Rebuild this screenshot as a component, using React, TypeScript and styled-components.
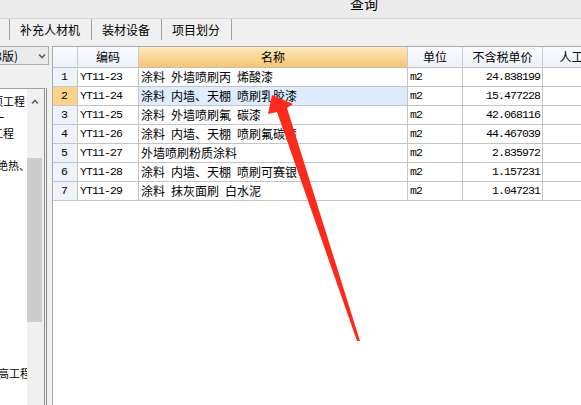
import React from 'react'
import styled, { createGlobalStyle } from 'styled-components'

type Row = {
    no: number
    code: string
    name: string
    unit: string
    price: string
}

type TreeItem = {
    text: string
    shift: number
}

const rows: Row[] = [
    { no: 1, code: 'YT11-23', name: '涂料\u2002外墙喷刷丙\u2002烯酸漆', unit: 'm2', price: '24.838199' },
    { no: 2, code: 'YT11-24', name: '涂料\u2002内墙、天棚\u2002喷刷乳胶漆', unit: 'm2', price: '15.477228' },
    { no: 3, code: 'YT11-25', name: '涂料\u2002外墙喷刷氟\u2002碳漆', unit: 'm2', price: '42.068116' },
    { no: 4, code: 'YT11-26', name: '涂料\u2002内墙、天棚\u2002喷刷氟碳漆', unit: 'm2', price: '44.467039' },
    { no: 5, code: 'YT11-27', name: '外墙喷刷粉质涂料', unit: 'm2', price: '2.835972' },
    { no: 6, code: 'YT11-28', name: '涂料\u2002内墙、天棚\u2002喷刷可赛银', unit: 'm2', price: '1.157231' },
    { no: 7, code: 'YT11-29', name: '涂料\u2002抹灰面刷\u2002白水泥', unit: 'm2', price: '1.047231' },
]

const selectedRow = 2

// left tree is scrolled off the window edge, only the tails of the labels show
const treeItems: TreeItem[] = [
    { text: '项工程', shift: -8 },
    { text: '一', shift: -7 },
    { text: '工程', shift: -8 },
    { text: '', shift: 0 },
    { text: '绝热、防腐', shift: -3 },
    ...Array.from({ length: 12 }, () => ({ text: '', shift: 0 })),
    { text: '高工程', shift: -2 },
]

const tabs = ['补充人材机', '装材设备', '项目划分']

const columns = [25, 61, 269, 55, 80, 70]

const GlobalStyle = createGlobalStyle`
    html, body {
        margin: 0;
        padding: 0;
    }
    body {
        background: #f0f0f0;
        font-family: "Noto Sans CJK SC", "Noto Sans", sans-serif;
        font-size: 12px;
        color: #000;
        overflow: hidden;
    }
`

const Window = styled.div`
    position: relative;
    width: 581px;
    height: 405px;
    overflow: hidden;
    display: flex;
    flex-direction: column;
`

const TitleBar = styled.div`
    height: 18px;
    flex-shrink: 0;
    background: #ebebeb;
    border-bottom: 1px solid #d7d7d7;
    padding-left: 350px;
    overflow: hidden;
`

const Title = styled.div`
    font-size: 14px;
    line-height: 14px;
    margin-top: -4px;
`

const Toolbar = styled.div`
    display: flex;
    height: 21px;
    flex-shrink: 0;
    padding-left: 9px;
`

const Tab = styled.div<{ $first?: boolean }>`
    display: flex;
    align-items: center;
    padding: 0 11px 0 10px;
    border-right: 1px solid #a3a3a3;
    border-left: ${p => (p.$first ? '1px solid #a3a3a3' : 'none')};
    white-space: nowrap;
    line-height: 12px;
`

const Main = styled.div`
    display: flex;
    flex: 1;
    min-height: 0;
`

const LeftPanel = styled.div`
    width: 52px;
    flex-shrink: 0;
    display: flex;
    flex-direction: column;
    padding-top: 6px;
    box-sizing: border-box;
`

const Dropdown = styled.div`
    width: 49px;
    height: 19px;
    box-sizing: border-box;
    border: 1px solid #adadad;
    border-left: none;
    background: #eaeaea;
    display: flex;
    justify-content: flex-end;
    align-items: center;
    overflow: hidden;
`

const DropdownLabel = styled.span`
    white-space: nowrap;
    flex-shrink: 0;
    line-height: 12px;
`

const DropdownArrow = styled.span`
    width: 30px;
    flex-shrink: 0;
    display: flex;
    padding-left: 20px;
    box-sizing: border-box;
`

const TreeBox = styled.div`
    margin-top: 23px;
    width: 47px;
    flex: 1;
    box-sizing: border-box;
    border-top: 1px solid #a0a0a0;
    border-right: 3px double #8e8e8e;
    display: flex;
`

const TreeList = styled.div`
    width: 27px;
    background: #fff;
    overflow: hidden;
    padding-top: 4px;
`

const TreeRow = styled.div<{ $shift: number }>`
    height: 16px;
    line-height: 16px;
    font-size: 11px;
    white-space: nowrap;
    margin-left: ${p => p.$shift}px;
`

const Scrollbar = styled.div`
    width: 17px;
    background: #f0f0f0;
    display: flex;
    flex-direction: column;
`

const ScrollButton = styled.div`
    height: 26px;
    display: flex;
    align-items: center;
    justify-content: center;
    padding-right: 2px;
`

const ScrollThumb = styled.div`
    margin-top: 43px;
    height: 164px;
    width: 15px;
    background: #cdcdcd;
`

const GridArea = styled.div`
    flex: 1;
    min-width: 0;
    padding-top: 6px;
    overflow: hidden;
`

const Grid = styled.div`
    height: 100%;
    background: #fff;
    border-left: 1px solid #a9a9b2;
    border-top: 1px solid #a9a9b2;
    overflow: hidden;
`

const GridRow = styled.div<{ $header?: boolean }>`
    display: grid;
    grid-template-columns: ${columns.map(c => `${c}px`).join(' ')};
    width: max-content;
    height: ${p => (p.$header ? 21 : 19)}px;
`

const HeaderCell = styled.div<{ $accent?: boolean }>`
    box-sizing: border-box;
    border-right: 1px solid #c6ccd6;
    border-bottom: 1px solid #c0c0c0;
    background: ${p => (p.$accent ? 'linear-gradient(#fde8bb, #f5c571)' : 'linear-gradient(#f9fbfe, #edf2f9)')};
    display: flex;
    align-items: center;
    justify-content: center;
    white-space: nowrap;
    overflow: hidden;
    line-height: 12px;
`

const Cell = styled.div<{ $align?: 'left' | 'center' | 'right'; $mono?: boolean; $bg?: string }>`
    box-sizing: border-box;
    border-right: 1px solid #c4c4c4;
    border-bottom: 1px solid #c4c4c4;
    background: ${p => p.$bg || '#fff'};
    display: flex;
    align-items: center;
    justify-content: ${p => (p.$align === 'right' ? 'flex-end' : p.$align === 'center' ? 'center' : 'flex-start')};
    padding: 0 2px 0 ${p => (p.$align === 'left' ? 2 : 0)}px;
    white-space: pre;
    overflow: hidden;
    line-height: 12px;
    font-family: ${p => (p.$mono ? '"Liberation Mono", monospace' : '"Noto Sans CJK SC", sans-serif')};
    font-size: ${p => (p.$mono ? 11.5 : 12)}px;
    letter-spacing: ${p => (p.$mono ? -0.9 : 0)}px;
`

const ArrowLayer = styled.svg`
    position: absolute;
    left: 0;
    top: 0;
    pointer-events: none;
`

const App = () => {
    return (
        <Window>
            <GlobalStyle />
            <TitleBar>
                <Title>查询</Title>
            </TitleBar>
            <Toolbar>
                {tabs.map((t, i) => (
                    <Tab key={t} $first={i === 0}>{t}</Tab>
                ))}
            </Toolbar>
            <Main>
                <LeftPanel>
                    <Dropdown>
                        <DropdownLabel>定额库(2013版)</DropdownLabel>
                        <DropdownArrow>
                            <svg width="8" height="6" viewBox="0 0 8 6">
                                <path d="M1 1.5 L4 4.5 L7 1.5" fill="none" stroke="#5f5f5f" strokeWidth="1.6" />
                            </svg>
                        </DropdownArrow>
                    </Dropdown>
                    <TreeBox>
                        <TreeList>
                            {treeItems.map((item, i) => (
                                <TreeRow key={i} $shift={item.shift}>{item.text}</TreeRow>
                            ))}
                        </TreeList>
                        <Scrollbar>
                            <ScrollButton>
                                <svg width="8" height="6" viewBox="0 0 8 6">
                                    <path d="M1 4.5 L4 1.5 L7 4.5" fill="none" stroke="#606060" strokeWidth="1.6" />
                                </svg>
                            </ScrollButton>
                            <ScrollThumb />
                        </Scrollbar>
                    </TreeBox>
                </LeftPanel>
                <GridArea>
                    <Grid>
                        <GridRow $header>
                            <HeaderCell />
                            <HeaderCell>编码</HeaderCell>
                            <HeaderCell $accent>名称</HeaderCell>
                            <HeaderCell>单位</HeaderCell>
                            <HeaderCell>不含税单价</HeaderCell>
                            <HeaderCell>人工费</HeaderCell>
                        </GridRow>
                        {rows.map(r => {
                            const active = r.no === selectedRow
                            return (
                                <GridRow key={r.code}>
                                    <Cell $align='center' $mono $bg={active ? '#fdd38c' : '#eef3fb'}>{r.no}</Cell>
                                    <Cell $align='left' $mono>{r.code}</Cell>
                                    <Cell $align='left' $bg={active ? '#deecfd' : undefined}>{r.name}</Cell>
                                    <Cell $align='left' $mono>{r.unit}</Cell>
                                    <Cell $align='right' $mono>{r.price}</Cell>
                                    <Cell />
                                </GridRow>
                            )
                        })}
                    </Grid>
                </GridArea>
            </Main>
            <ArrowLayer width="581" height="405" viewBox="0 0 581 405">
                <polygon
                    points="272,95 293,104 287,108 360,341 357,341 277,112 268,114"
                    fill="#fb2a1c"
                />
            </ArrowLayer>
        </Window>
    )
}

export default App
